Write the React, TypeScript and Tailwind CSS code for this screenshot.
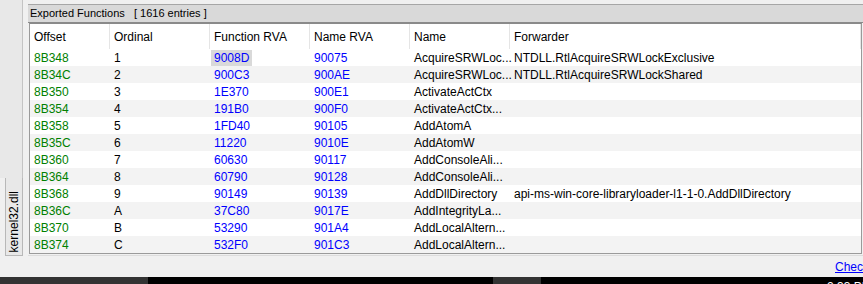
import React from 'react';

interface ExportRow {
  offset: string;
  ordinal: string;
  funcRva: string;
  nameRva: string;
  name: string;
  forwarder: string;
}

const rows: ExportRow[] = [
  { offset: '8B348', ordinal: '1', funcRva: '9008D', nameRva: '90075', name: 'AcquireSRWLoc...', forwarder: 'NTDLL.RtlAcquireSRWLockExclusive' },
  { offset: '8B34C', ordinal: '2', funcRva: '900C3', nameRva: '900AE', name: 'AcquireSRWLoc...', forwarder: 'NTDLL.RtlAcquireSRWLockShared' },
  { offset: '8B350', ordinal: '3', funcRva: '1E370', nameRva: '900E1', name: 'ActivateActCtx', forwarder: '' },
  { offset: '8B354', ordinal: '4', funcRva: '191B0', nameRva: '900F0', name: 'ActivateActCtx...', forwarder: '' },
  { offset: '8B358', ordinal: '5', funcRva: '1FD40', nameRva: '90105', name: 'AddAtomA', forwarder: '' },
  { offset: '8B35C', ordinal: '6', funcRva: '11220', nameRva: '9010E', name: 'AddAtomW', forwarder: '' },
  { offset: '8B360', ordinal: '7', funcRva: '60630', nameRva: '90117', name: 'AddConsoleAli...', forwarder: '' },
  { offset: '8B364', ordinal: '8', funcRva: '60790', nameRva: '90128', name: 'AddConsoleAli...', forwarder: '' },
  { offset: '8B368', ordinal: '9', funcRva: '90149', nameRva: '90139', name: 'AddDllDirectory', forwarder: 'api-ms-win-core-libraryloader-l1-1-0.AddDllDirectory' },
  { offset: '8B36C', ordinal: 'A', funcRva: '37C80', nameRva: '9017E', name: 'AddIntegrityLa...', forwarder: '' },
  { offset: '8B370', ordinal: 'B', funcRva: '53290', nameRva: '901A4', name: 'AddLocalAltern...', forwarder: '' },
  { offset: '8B374', ordinal: 'C', funcRva: '532F0', nameRva: '901C3', name: 'AddLocalAltern...', forwarder: '' },
];

// column header cells: first column is narrower than the rest
const headers = [
  { label: 'Offset', cls: 'w-[80px]' },
  { label: 'Ordinal', cls: 'w-[100px]' },
  { label: 'Function RVA', cls: 'w-[100px]' },
  { label: 'Name RVA', cls: 'w-[100px]' },
  { label: 'Name', cls: 'w-[100px]' },
  { label: 'Forwarder', cls: 'flex-1' },
];

const App = () => {
  return (
    <div
      className="w-[863px] h-[284px] bg-[#f0f0f0] flex flex-col overflow-hidden text-[12px] text-black"
      style={{ fontFamily: '"Liberation Sans", Arial, sans-serif' }}
    >
      <div className="flex h-[277px]">
        {/* Left vertical tab strip */}
        <div className="w-[28px] flex flex-col">
          <div className="w-[23px] h-[178px] bg-[#e8e8e8] border-r border-[#c4c4c4]" />
          <div className="ml-[5px] w-[18px] h-[78px] bg-[#e8e8e8] border-x border-b border-[#b8b8b8] flex items-end justify-center pb-[3px]">
            <span className="[writing-mode:vertical-rl] rotate-180 leading-none whitespace-nowrap">kernel32.dll</span>
          </div>
        </div>

        {/* Main panel */}
        <div className="flex-1 flex flex-col pt-[4px]">
          <div className="h-[19px] bg-[#d9d9d9] border-t border-[#a6a6a6] border-b border-b-[#8a8a8a] flex items-center pl-[2px] whitespace-pre text-[11px]">
            {'Exported Functions   [ 1616 entries ]'}
          </div>

          <div className="ml-[1px] mr-[1px] bg-white border border-[#9a9a9a] border-t-[#8a8a8a]">
            {/* Column headers */}
            <div className="flex h-[25px]">
              {headers.map((h) => (
                <div key={h.label} className={`${h.cls} flex items-center pl-[4px] border-r border-[#e5e5e5]`}>
                  {h.label}
                </div>
              ))}
            </div>

            {/* Rows */}
            {rows.map((r, i) => (
              <div key={r.offset} className={i % 2 === 0 ? 'flex h-[17px] bg-white' : 'flex h-[17px] bg-[#f3f3f3]'}>
                <div className="w-[80px] pl-[4px] flex items-center text-[#008000]">{r.offset}</div>
                <div className="w-[100px] pl-[4px] flex items-center">{r.ordinal}</div>
                <div className="w-[100px] pl-[1px] flex items-center text-[#0000ff]">
                  <span className={i === 0 ? 'bg-[#d9d9d9] h-[16px] flex items-center px-[3px]' : 'px-[3px]'}>{r.funcRva}</span>
                </div>
                <div className="w-[100px] pl-[4px] flex items-center text-[#0000ff]">{r.nameRva}</div>
                <div className="w-[100px] pl-[4px] flex items-center whitespace-nowrap">{r.name}</div>
                <div className="flex-1 pl-[4px] flex items-center whitespace-nowrap overflow-hidden">{r.forwarder}</div>
              </div>
            ))}
          </div>

          <div className="mt-[1px] border-t border-[#dcdcdc]" />
          <div className="flex-1 flex items-center justify-end">
            <span className="text-[#0000ff] underline whitespace-nowrap">Chec</span>
          </div>
        </div>
      </div>

      {/* Taskbar */}
      <div className="h-[7px] flex bg-black">
        <div className="w-[148px] bg-[#333333]" />
        <div className="w-[345px]" />
        <div className="w-[48px] bg-[#333333]" />
        <div className="flex-1 flex justify-end">
          <span className="text-white text-[12px] leading-none pt-[4px] w-[36px] overflow-hidden whitespace-nowrap">2:33 PM</span>
        </div>
      </div>
    </div>
  );
};

export default App;
